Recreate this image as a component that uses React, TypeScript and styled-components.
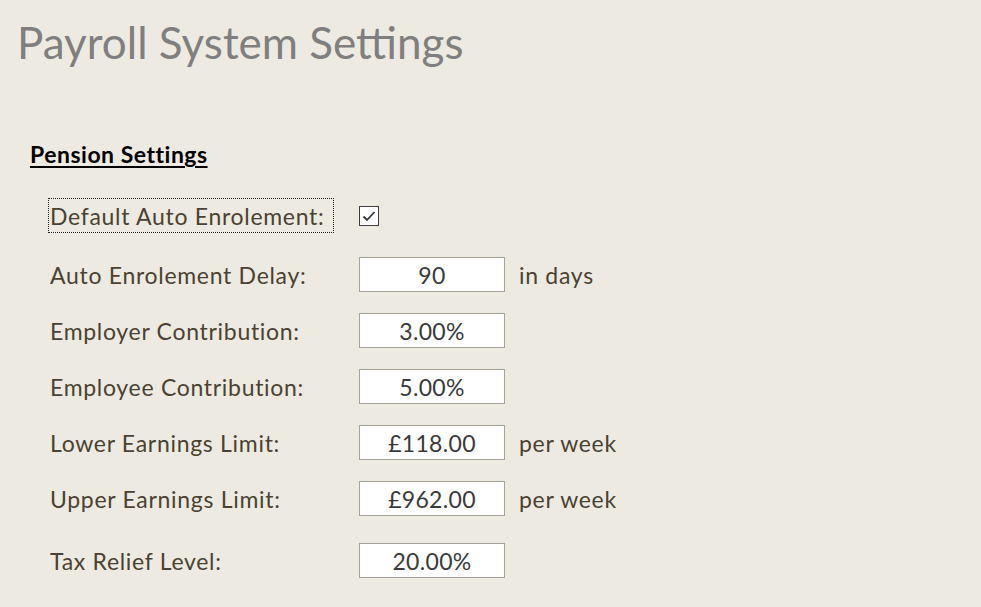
import React from "react";
import styled, { createGlobalStyle } from "styled-components";

const Global = createGlobalStyle`
  html, body { margin: 0; padding: 0; background: #edebe1; }
  body { font-family: "Lato", "Open Sans", sans-serif; }
`;

const Page = styled.div`
  width: 981px;
  height: 607px;
  background: #edebe1;
  box-sizing: border-box;
  padding: 15px 0 0 17px;
  overflow: hidden;
`;

const Title = styled.h1`
  margin: 0;
  font-family: "Lato", sans-serif;
  font-weight: 400;
  font-size: 44px;
  line-height: 54px;
  color: #7f7f7f;
`;

const SectionHeading = styled.h2`
  margin: 71px 0 0 13px;
  font-family: "Lato", sans-serif;
  font-weight: 700;
  font-size: 23px;
  letter-spacing: 0.5px;
  line-height: 28px;
  color: #000;
  text-decoration: underline;
  text-decoration-thickness: 2px;
  text-underline-offset: 3px;
`;

const Form = styled.div`
  display: flex;
  flex-direction: column;
  margin: 30px 0 0 31px;
`;

const Row = styled.div<{ $top: number }>`
  display: grid;
  grid-template-columns: 297px 146px auto;
  column-gap: 14px;
  align-items: center;
  height: 35px;
  margin-top: ${(p) => p.$top}px;
`;

const Label = styled.div<{ $focused?: boolean }>`
  justify-self: start;
  box-sizing: border-box;
  height: 35px;
  display: flex;
  align-items: center;
  padding: 0 9px 0 1px;
  border: 1px dotted ${(p) => (p.$focused ? "#222" : "transparent")};
  font-size: 23px;
  letter-spacing: 0.7px;
  color: #4a4232;
  white-space: nowrap;
`;

const Input = styled.div`
  box-sizing: border-box;
  width: 146px;
  height: 35px;
  background: #fff;
  border: 1px solid #a5a29a;
  display: flex;
  align-items: center;
  justify-content: center;
  font-size: 23px;
  letter-spacing: 0.3px;
  color: #3a3a3a;
`;

const Suffix = styled.div`
  font-size: 23px;
  letter-spacing: 0.7px;
  color: #4a4232;
  white-space: nowrap;
`;

const CheckBox = styled.div`
  box-sizing: border-box;
  width: 20px;
  height: 20px;
  border: 1.5px solid #3c3c3c;
  background: #fff;
  display: flex;
  align-items: center;
  justify-content: center;
`;

type Field = { label: string; value: string; suffix?: string; top: number };

const fields: Field[] = [
  { label: "Auto Enrolement Delay:", value: "90", suffix: "in days", top: 24 },
  { label: "Employer Contribution:", value: "3.00%", top: 21 },
  { label: "Employee Contribution:", value: "5.00%", top: 21 },
  { label: "Lower Earnings Limit:", value: "£118.00", suffix: "per week", top: 21 },
  { label: "Upper Earnings Limit:", value: "£962.00", suffix: "per week", top: 21 },
  { label: "Tax Relief Level:", value: "20.00%", top: 27 },
];

export default function App() {
  return (
    <Page>
      <Global />
      <Title>Payroll System Settings</Title>
      <SectionHeading>Pension Settings</SectionHeading>
      <Form>
        <Row $top={0}>
          <Label $focused>Default Auto Enrolement:</Label>
          <CheckBox>
            <svg width="14" height="12" viewBox="0 0 14 12">
              <path d="M1.5 6.5 L5 10 L12.5 2" fill="none" stroke="#333" strokeWidth="1.8" />
            </svg>
          </CheckBox>
          <span />
        </Row>
        {fields.map((f) => (
          <Row key={f.label} $top={f.top}>
            <Label>{f.label}</Label>
            <Input>{f.value}</Input>
            {f.suffix ? <Suffix>{f.suffix}</Suffix> : <span />}
          </Row>
        ))}
      </Form>
    </Page>
  );
}
